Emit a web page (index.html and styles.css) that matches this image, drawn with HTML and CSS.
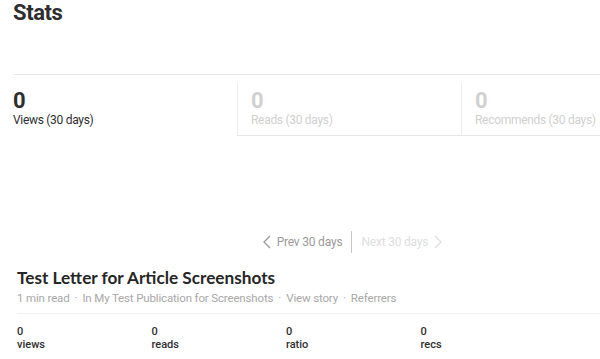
FILE: index.html
```html
<!DOCTYPE html>
<html lang="en">
<head>
    <meta charset="UTF-8">
    <meta name="viewport" content="width=device-width, initial-scale=1.0">
    <title>Stats</title>
    <link rel="stylesheet" href="styles.css">
</head>
<body>
    <div class="stats-page">
        <h1 class="page-title">Stats</h1>

        <div class="summary">
            <div class="summary-tab is-active">
                <div class="summary-count">0</div>
                <div class="summary-label">Views (30 days)</div>
            </div>
            <div class="summary-tab">
                <div class="summary-count">0</div>
                <div class="summary-label">Reads (30 days)</div>
            </div>
            <div class="summary-tab">
                <div class="summary-count">0</div>
                <div class="summary-label">Recommends (30 days)</div>
            </div>
        </div>

        <div class="pager">
            <a class="pager-link" href="#">
                <svg class="chevron" viewBox="0 0 8 14" width="8" height="14"><path d="M7 1 1 7l6 6" /></svg>
                Prev 30 days
            </a>
            <span class="pager-divider"></span>
            <a class="pager-link is-disabled" href="#">
                Next 30 days
                <svg class="chevron" viewBox="0 0 8 14" width="8" height="14"><path d="M1 1l6 6-6 6" /></svg>
            </a>
        </div>

        <div class="story">
            <h2 class="story-title">Test Letter for Article Screenshots</h2>
            <div class="story-meta">
                <span>1 min read</span>
                <span class="dot">·</span>
                <span>In My Test Publication for Screenshots</span>
                <span class="dot">·</span>
                <span>View story</span>
                <span class="dot">·</span>
                <span>Referrers</span>
            </div>
            <div class="story-stats">
                <div class="story-stat"><div>0</div><div>views</div></div>
                <div class="story-stat"><div>0</div><div>reads</div></div>
                <div class="story-stat"><div>0</div><div>ratio</div></div>
                <div class="story-stat"><div>0</div><div>recs</div></div>
            </div>
        </div>
    </div>
</body>
</html>
```

FILE: styles.css
```css
/* Reset */
* {
    margin: 0;
    padding: 0;
    box-sizing: border-box;
}

body {
    width: 600px;
    height: 359px;
    overflow: hidden;
    background: #fff;
    font-family: 'Roboto', 'Liberation Sans', sans-serif;
    color: rgba(0, 0, 0, 0.8);
}

/* The stats column is wider than the window, like the original */
.stats-page {
    width: 692px;
    padding-left: 13px;
}

/* Page heading */
.page-title {
    font-size: 22px;
    line-height: 26px;
    font-weight: 700;
    letter-spacing: -0.4px;
    color: #2e2e2e;
    height: 75px;
    border-bottom: 1px solid #e8e8e8;
}

/* Summary tabs */
.summary {
    display: flex;
    margin-top: 8px;
}

.summary-tab {
    flex: 0 0 224px;
    height: 53px;
    padding: 5px 13px 0;
    border-left: 1px solid #ececec;
    border-bottom: 1px solid #e6e6e6;
    color: #d0d0d0;
}

.summary-tab.is-active {
    border: none;
    padding-left: 0;
    color: #2e2e2e;
}

.summary-count {
    font-size: 22px;
    line-height: 25px;
    font-weight: 700;
}

.summary-label {
    font-size: 12px;
    line-height: 15px;
    letter-spacing: -0.3px;
}

/* Prev / next */
.pager {
    display: flex;
    justify-content: center;
    align-items: center;
    gap: 9px;
    margin-top: 95px;
    font-size: 12px;
    letter-spacing: -0.2px;
}

.pager-link {
    display: flex;
    align-items: center;
    gap: 6px;
    color: #9a9a9a;
    text-decoration: none;
}

.pager-link.is-disabled {
    color: #dedede;
}

.chevron path {
    fill: none;
    stroke: currentColor;
    stroke-width: 1.3;
}

.pager-divider {
    width: 1px;
    height: 22px;
    background: #c9c9c9;
}

/* Story row */
.story {
    width: 587px;
    padding-left: 4px;
    margin-top: 14px;
}

.story-title {
    font-family: 'Lato', sans-serif;
    font-size: 17.2px;
    line-height: 21px;
    font-weight: 700;
    color: #262626;
}

.story-meta {
    display: flex;
    gap: 5px;
    margin-top: 2px;
    font-size: 11.5px;
    line-height: 16px;
    letter-spacing: -0.15px;
    color: #a8a8a8;
    padding-bottom: 7px;
    border-bottom: 1px solid #f0f0f0;
}

.story-stats {
    display: flex;
    padding-top: 11px;
}

.story-stat {
    flex: 0 0 134.5px;
    font-size: 11px;
    line-height: 13px;
    font-weight: 500;
    color: #2e2e2e;
}
```
